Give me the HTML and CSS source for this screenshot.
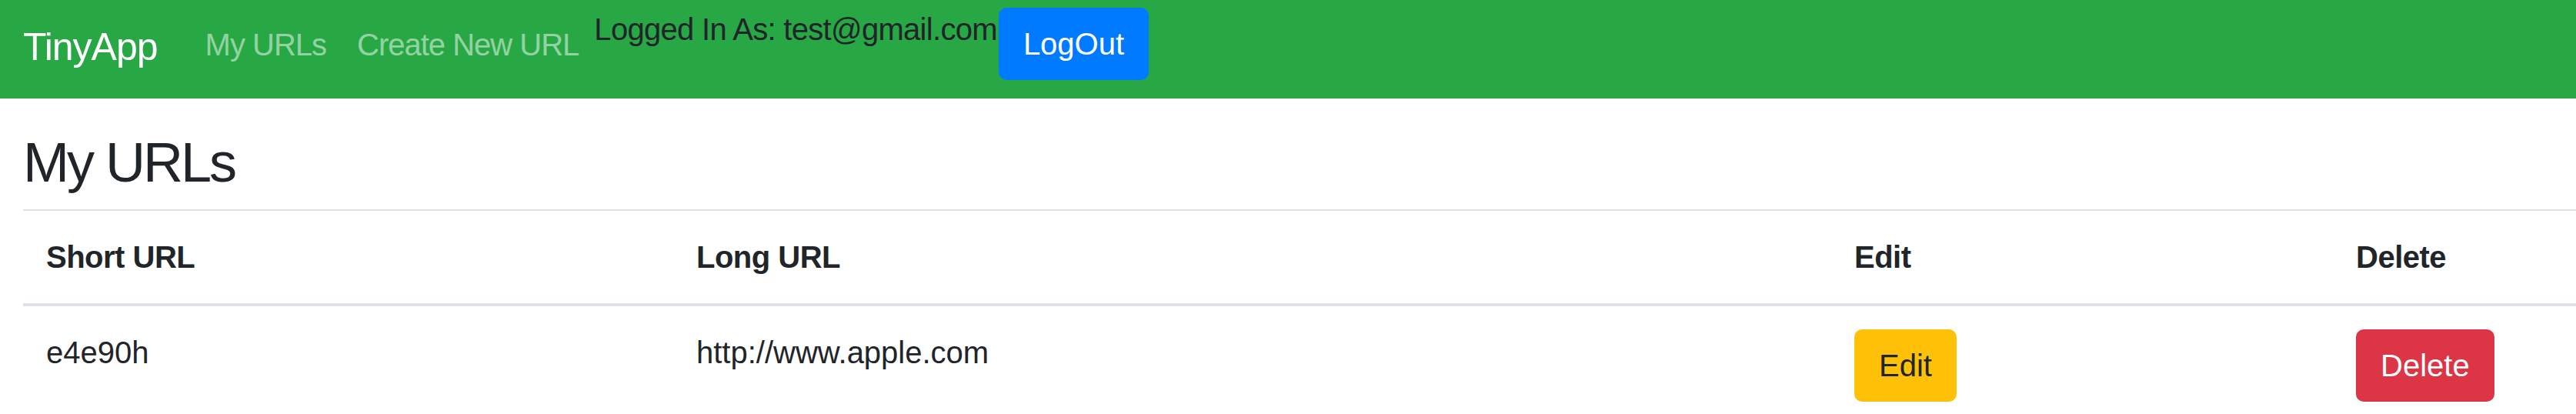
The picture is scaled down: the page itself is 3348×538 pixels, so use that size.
FILE: index.html
```html
<!DOCTYPE html>
<html lang="en">
<head>
<meta charset="utf-8">
<title>TinyApp - My URLs</title>
<link rel="stylesheet" href="styles.css">
</head>
<body>
<nav class="navbar">
  <a class="brand" href="#">TinyApp</a>
  <ul class="nav">
    <li><a class="nav-link" href="#">My URLs</a></li>
    <li><a class="nav-link" href="#">Create New URL</a></li>
  </ul>
  <span class="user">Logged In As: test@gmail.com</span>
  <form class="logout-form"><button class="btn btn-primary" type="button">LogOut</button></form>
</nav>
<main class="container">
  <h2 class="title">My URLs</h2>
  <table class="table">
    <colgroup>
      <col class="col-short">
      <col class="col-long">
      <col class="col-edit">
      <col class="col-delete">
    </colgroup>
    <thead>
      <tr><th>Short URL</th><th>Long URL</th><th>Edit</th><th>Delete</th></tr>
    </thead>
    <tbody>
      <tr>
        <td>e4e90h</td>
        <td>http://www.apple.com</td>
        <td><a class="btn btn-warning" href="#">Edit</a></td>
        <td><form class="inline-form"><button class="btn btn-danger" type="button">Delete</button></form></td>
      </tr>
    </tbody>
  </table>
</main>
</body>
</html>
```

FILE: styles.css
```css
html {
  overflow: hidden;
}

body {
  margin: 0;
  font-family: "Liberation Sans", Arial, sans-serif;
  font-size: 40px;
  line-height: 60px;
  color: #212529;
  background: #fff;
}

/* ---------- navbar ---------- */
.navbar {
  display: flex;
  align-items: flex-start;
  height: 128px;
  box-sizing: border-box;
  padding: 0 30px;
  background: #28a745;
}

.brand {
  padding-top: 24px;
  margin-right: 42px;
  font-size: 50px;
  line-height: 75px;
  letter-spacing: -1px;
  color: #fff;
  text-decoration: none;
  white-space: nowrap;
}

.nav {
  display: flex;
  margin: 0;
  padding: 28px 0 0;
  list-style: none;
}

.nav-link {
  display: block;
  padding: 0 20px;
  line-height: 60px;
  letter-spacing: -1px;
  color: rgba(255, 255, 255, 0.5);
  text-decoration: none;
  white-space: nowrap;
}

.user {
  padding-top: 8px;
  line-height: 60px;
  letter-spacing: -0.7px;
  color: #212529;
  white-space: nowrap;
}

.logout-form {
  margin: 10px 0 0 2px;
}

/* ---------- buttons ---------- */
.btn {
  display: inline-block;
  box-sizing: border-box;
  padding: 15px 30px;
  border: 2px solid transparent;
  border-radius: 10px;
  font-family: inherit;
  font-size: 40px;
  line-height: 60px;
  text-align: center;
  text-decoration: none;
  white-space: nowrap;
  cursor: pointer;
}

.btn-primary {
  background: #007bff;
  border-color: #007bff;
  color: #fff;
}

.btn-warning {
  background: #ffc107;
  border-color: #ffc107;
  color: #212529;
}

.btn-danger {
  background: #dc3545;
  border-color: #dc3545;
  color: #fff;
}

.inline-form {
  margin: 0;
}

/* ---------- content ---------- */
.container {
  padding: 0 0 0 30px;
}

.title {
  margin: 40px 0 18px;
  font-size: 72px;
  font-weight: 400;
  line-height: 86px;
  letter-spacing: -3px;
}

.table {
  width: 100%;
  table-layout: fixed;
  border-collapse: separate;
  border-spacing: 0;
}

.col-short { width: 845px; }
.col-long { width: 1505px; }
.col-edit { width: 652px; }

.table th,
.table td {
  padding: 30px;
  text-align: left;
  vertical-align: top;
  line-height: 60px;
}

.table th {
  font-weight: 700;
  letter-spacing: -0.5px;
  border-top: 2px solid #dee2e6;
  border-bottom: 4px solid #dee2e6;
}
```
